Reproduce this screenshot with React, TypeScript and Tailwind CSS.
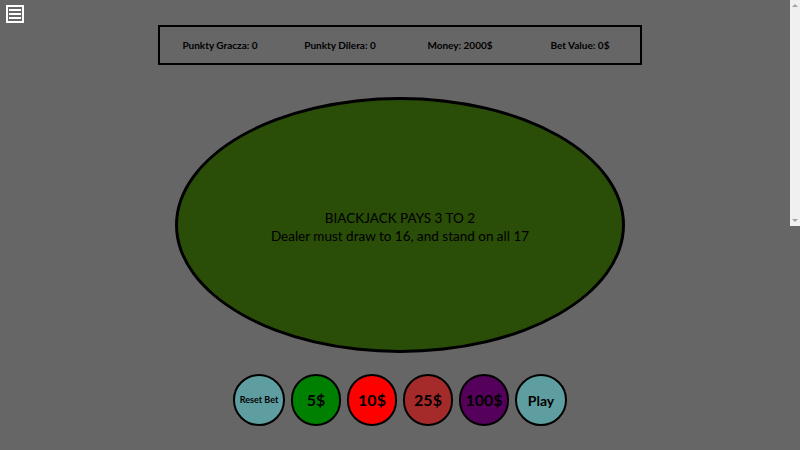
const chips = [
  { label: "5$", bg: "bg-[#008000]" },
  { label: "10$", bg: "bg-[#ff0000]" },
  { label: "25$", bg: "bg-[#a52a2a]" },
  { label: "100$", bg: "bg-[#55005a]" },
]

export default function App() {
  return (
    <div
      className="relative h-[450px] w-[800px] overflow-hidden bg-[#666666] text-black"
      style={{ fontFamily: 'Lato, "Noto Sans", sans-serif' }}
    >
      {/* menu button */}
      <button className="absolute left-[6px] top-[5px] flex h-[18px] w-[18px] flex-col items-center justify-center gap-[2px] border-2 border-white">
        <span className="h-[2px] w-[12px] bg-white" />
        <span className="h-[2px] w-[12px] bg-white" />
        <span className="h-[2px] w-[12px] bg-white" />
      </button>

      {/* fake scrollbar */}
      <div className="absolute right-0 top-0 flex h-[226px] w-[10px] flex-col items-center justify-between bg-[#f0f0f0] py-[4px]">
        <span className="h-0 w-0 border-x-[3px] border-b-[3px] border-x-transparent border-b-[#a3a3a3]" />
        <span className="h-0 w-0 border-x-[3px] border-t-[3px] border-x-transparent border-t-[#a3a3a3]" />
      </div>

      <div className="flex flex-col items-center pt-[25px]">
        {/* stats */}
        <div className="grid h-[40px] w-[484px] grid-cols-4 items-center border-2 border-black text-[10px] font-bold">
          <span className="text-center">Punkty Gracza: 0</span>
          <span className="text-center">Punkty Dilera: 0</span>
          <span className="text-center">Money: 2000$</span>
          <span className="text-center">Bet Value: 0$</span>
        </div>

        {/* table */}
        <div className="mt-[32px] flex h-[256px] w-[450px] flex-col items-center justify-center rounded-[50%] border-[3px] border-black bg-[#2a4d07] pt-[4px] text-[13.5px] leading-[18px]">
          <p>BIACKJACK PAYS 3 TO 2</p>
          <p>Dealer must draw to 16, and stand on all 17</p>
        </div>

        {/* chips */}
        <div className="mt-[21px] flex items-center gap-[6px]">
          <button className="flex h-[52px] w-[52px] items-center justify-center rounded-full border-2 border-black bg-[#5f9ea0] text-[9px] font-bold">
            Reset Bet
          </button>
          {chips.map((c) => (
            <button
              key={c.label}
              className={`flex h-[52px] w-[50px] items-center justify-center rounded-full border-2 border-black text-[16px] font-bold ${c.bg}`}
            >
              {c.label}
            </button>
          ))}
          <button className="flex h-[52px] w-[52px] items-center justify-center rounded-full border-2 border-black bg-[#5f9ea0] text-[14px] font-bold">
            Play
          </button>
        </div>
      </div>
    </div>
  )
}
